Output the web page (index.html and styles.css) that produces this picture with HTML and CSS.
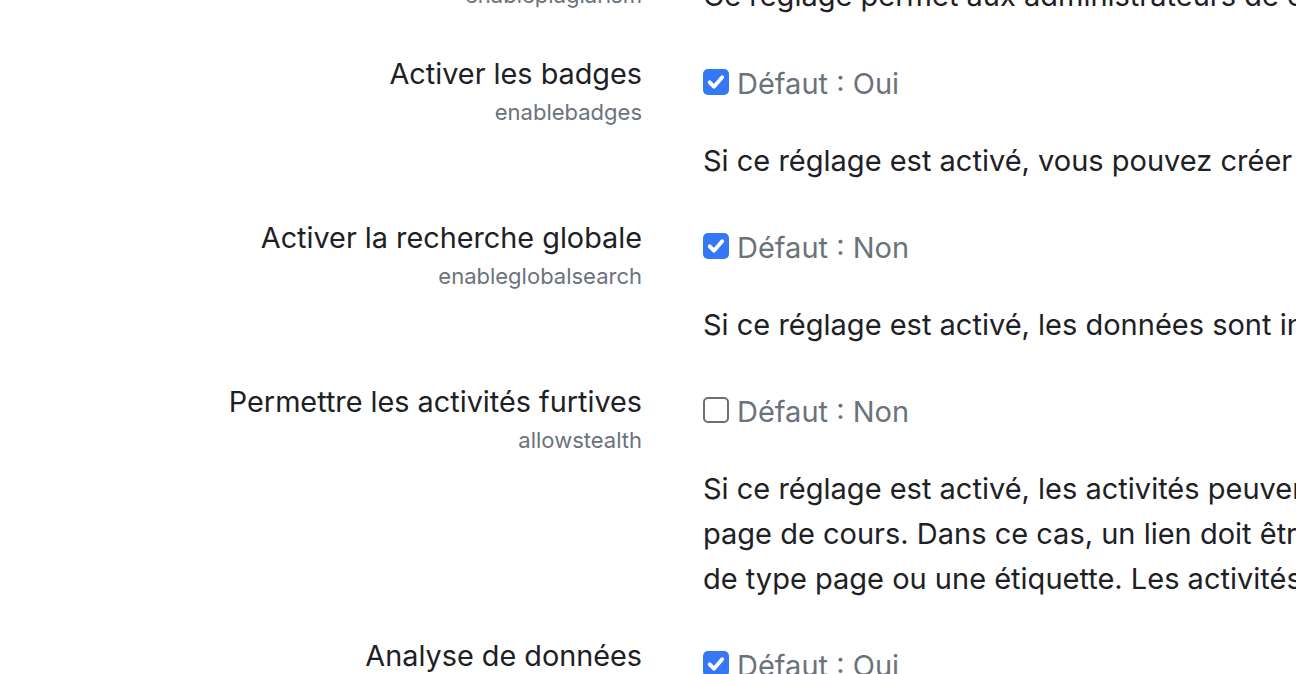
FILE: index.html
```html
<!DOCTYPE html>
<html lang="fr">
<head>
    <meta charset="UTF-8">
    <meta name="viewport" content="width=device-width, initial-scale=1.0">
    <title>Fonctions avancées</title>
    <link rel="stylesheet" href="styles.css">
</head>
<body>
    <div class="settings">
        <!-- fin du réglage précédent (hors écran en haut) -->
        <div class="setting-row setting-tail">
            <div class="setting-label">
                <span class="setting-name">enableplagiarism</span>
            </div>
            <div class="setting-value">
                <p class="setting-desc">Ce réglage permet aux administrateurs de configurer les plugins de plagiat</p>
            </div>
        </div>

        <div class="setting-row">
            <div class="setting-label">
                <label for="enablebadges">Activer les badges</label>
                <span class="setting-name">enablebadges</span>
            </div>
            <div class="setting-value">
                <div class="default-line">
                    <span class="check checked"><svg viewBox="0 0 16 16"><path d="M3.4 8.3l3.1 3.1 6-6.9"/></svg></span>
                    <span class="default-text">Défaut : Oui</span>
                </div>
                <p class="setting-desc">Si ce réglage est activé, vous pouvez créer des badges et les attribuer aux utilisateurs du site.</p>
            </div>
        </div>

        <div class="setting-row">
            <div class="setting-label">
                <label for="enableglobalsearch">Activer la recherche globale</label>
                <span class="setting-name">enableglobalsearch</span>
            </div>
            <div class="setting-value">
                <div class="default-line">
                    <span class="check checked"><svg viewBox="0 0 16 16"><path d="M3.4 8.3l3.1 3.1 6-6.9"/></svg></span>
                    <span class="default-text">Défaut : Non</span>
                </div>
                <p class="setting-desc">Si ce réglage est activé, les données sont indexées et synchronisées par une tâche planifiée.</p>
            </div>
        </div>

        <div class="setting-row">
            <div class="setting-label">
                <label for="allowstealth">Permettre les activités furtives</label>
                <span class="setting-name">allowstealth</span>
            </div>
            <div class="setting-value">
                <div class="default-line">
                    <span class="check"></span>
                    <span class="default-text">Défaut : Non</span>
                </div>
                <p class="setting-desc">Si ce réglage est activé, les activités peuvent être rendues disponibles sans être affichées sur la<br>page de cours. Dans ce cas, un lien doit être ajouté depuis un autre endroit, par exemple une ressource<br>de type page ou une étiquette. Les activités furtives restent accessibles aux participants.</p>
            </div>
        </div>

        <div class="setting-row">
            <div class="setting-label">
                <label for="enableanalytics">Analyse de données</label>
                <span class="setting-name">enableanalytics</span>
            </div>
            <div class="setting-value">
                <div class="default-line">
                    <span class="check checked"><svg viewBox="0 0 16 16"><path d="M3.4 8.3l3.1 3.1 6-6.9"/></svg></span>
                    <span class="default-text">Défaut : Oui</span>
                </div>
                <p class="setting-desc">Les modèles d'analyse de données permettent de prédire les étudiants à risque.</p>
            </div>
        </div>
    </div>
</body>
</html>
```

FILE: styles.css
```css
/* Page */
html {
    overflow: hidden;
}

body {
    font-family: Inter, "Noto Sans", sans-serif;
    background-color: #fff;
    color: #1d2125;
    margin: 0;
    padding: 0;
}

.settings {
    margin-top: -27px;
}

/* One setting = label column + value column */
.setting-row {
    display: grid;
    grid-template-columns: 642px 1500px;
    column-gap: 61px;
    padding-bottom: 33px;
}

.setting-tail {
    padding-bottom: 34px;
}

.setting-tail .setting-name {
    margin-top: 6px;
}

/* Left column */
.setting-label {
    display: flex;
    flex-direction: column;
    align-items: flex-end;
    text-align: right;
}

.setting-label label {
    font-size: 28.8px;
    line-height: 44px;
}

.setting-name {
    font-size: 22px;
    line-height: 33px;
    color: #6a737b;
}

/* Right column */
.default-line {
    display: flex;
    align-items: center;
    gap: 8px;
    height: 44px;
    margin-top: 9px;
}

.default-text {
    font-size: 29px;
    color: #6a737b;
}

.check {
    width: 26px;
    height: 26px;
    box-sizing: border-box;
    border: 2px solid #6f6f6f;
    border-radius: 5px;
    background: #fff;
    margin-bottom: 3px;
    display: flex;
    align-items: center;
    justify-content: center;
}

.check.checked {
    border: none;
    background: #3478f6;
}

.check svg {
    width: 22px;
    height: 22px;
    fill: none;
    stroke: #fff;
    stroke-width: 2.8;
    stroke-linecap: round;
    stroke-linejoin: round;
}

.setting-desc {
    font-size: 29px;
    line-height: 45px;
    margin: 33px 0 0;
    white-space: nowrap;
}

.setting-tail .setting-desc {
    margin-top: 0;
}
```
